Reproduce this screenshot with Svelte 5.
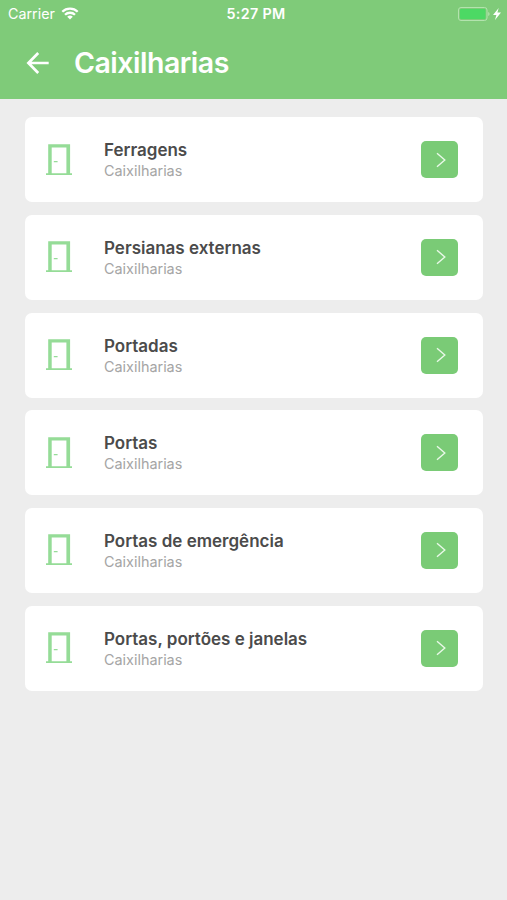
<script lang="ts">
	const category = "Caixilharias";

	const items = [
		"Ferragens",
		"Persianas externas",
		"Portadas",
		"Portas",
		"Portas de emergência",
		"Portas, portões e janelas"
	];
</script>

<main>
	<header>
		<div class="status-bar">
			<div class="carrier">
				<span>Carrier</span>
				<svg width="18" height="13" viewBox="0 0 18 13" fill="none" stroke="#fff" stroke-width="2.3">
					<path d="M1.3 4.7a11 11 0 0 1 15.4 0" />
					<path d="M4 7.8a7.1 7.1 0 0 1 10 0" />
					<path d="M9 12.5 6.2 9.8a4 4 0 0 1 5.6 0z" fill="#fff" stroke="none" />
				</svg>
			</div>
			<span class="time">5:27 PM</span>
			<div class="battery">
				<svg width="44" height="14" viewBox="0 0 44 14">
					<rect x="0.5" y="0.5" width="28.5" height="13" rx="2.5" fill="none" stroke="#b3e3ae" />
					<rect x="2" y="2" width="25.5" height="10" rx="1" fill="#4cd964" />
					<path d="M30.2 5v4q1.4-.6 1.4-2t-1.4-2z" fill="#b3e3ae" />
					<path d="M40.7 1 35 7.9h3.4L37 13l6-7.4h-3.6z" fill="#fff" />
				</svg>
			</div>
		</div>
		<div class="title-bar">
			<button class="back" aria-label="Voltar">
				<svg width="24" height="24" viewBox="0 0 24 24" fill="none" stroke="#fff" stroke-width="2.7">
					<path d="M23.7 12H4M13.2 2 3.4 12l9.8 10" />
				</svg>
			</button>
			<h1>{category}</h1>
		</div>
	</header>

	<div class="list">
		{#each items as item}
			<div class="card">
				<svg class="door" width="26" height="32" viewBox="0 0 26 32" fill="#95dc97">
					<path d="M2.2 0.3h21.9v29H26v1.8H0v-1.8h2.2zM5.7 3.6v25.7h14.7V3.6z" fill-rule="evenodd" />
					<rect x="7.7" y="16.9" width="4" height="1.4" rx="0.6" />
				</svg>
				<div class="text">
					<h2>{item}</h2>
					<p>{category}</p>
				</div>
				<button class="open" aria-label={item}>
					<svg width="10" height="16" viewBox="0 0 10 16" fill="none" stroke="#e9f8e8" stroke-width="1.4">
						<path d="m1 1.3 7.8 6.7L1 14.7" />
					</svg>
				</button>
			</div>
		{/each}
	</div>
</main>

<style>
	:global(body) {
		background-color: #ededed;
	}

	main {
		min-height: 900px;
		background-color: #ededed;
		font-family: Inter, "Liberation Sans", sans-serif;
	}

	header {
		height: 98.5px;
		background-color: #7fcb79;
		color: white;
	}

	.status-bar {
		display: grid;
		grid-template-columns: 1fr auto 1fr;
		align-items: center;
		height: 27px;
		padding: 0 5px 0 8px;
		font-size: 14.3px;
	}

	.carrier {
		display: flex;
		align-items: center;
		gap: 6px;
	}

	.time {
		padding-left: 2px;
		font-size: 14.3px;
		font-weight: 600;
		letter-spacing: 0.35px;
	}

	.battery {
		display: flex;
		justify-content: flex-end;
	}

	.title-bar {
		display: flex;
		align-items: center;
		height: 71px;
		padding-left: 25px;
	}

	button {
		display: flex;
		align-items: center;
		justify-content: center;
		padding: 0;
		border: none;
		background: none;
		cursor: pointer;
	}

	h1 {
		margin: 0 0 0 25px;
		font-size: 28.5px;
		font-weight: 600;
		line-height: 36px;
		letter-spacing: -0.5px;
	}

	.list {
		display: flex;
		flex-direction: column;
		gap: 12.7px;
		padding: 18.7px 24.5px 0 25px;
	}

	.card {
		display: flex;
		align-items: center;
		height: 85px;
		padding: 0 24.5px 0 21px;
		box-sizing: border-box;
		border-radius: 7px;
		background-color: white;
	}

	.text {
		flex-grow: 1;
		padding: 2px 0 0 32px;
	}

	h2 {
		margin: 0;
		color: #4b4b4b;
		font-size: 17px;
		font-weight: 600;
		line-height: 21px;
	}

	p {
		margin: 0;
		color: #a5a5a5;
		font-size: 14.4px;
		line-height: 20px;
	}

	.open {
		width: 37px;
		height: 37px;
		border-radius: 5px;
		background-color: #7acb76;
	}

	.open svg {
		margin-left: 2px;
	}
</style>
